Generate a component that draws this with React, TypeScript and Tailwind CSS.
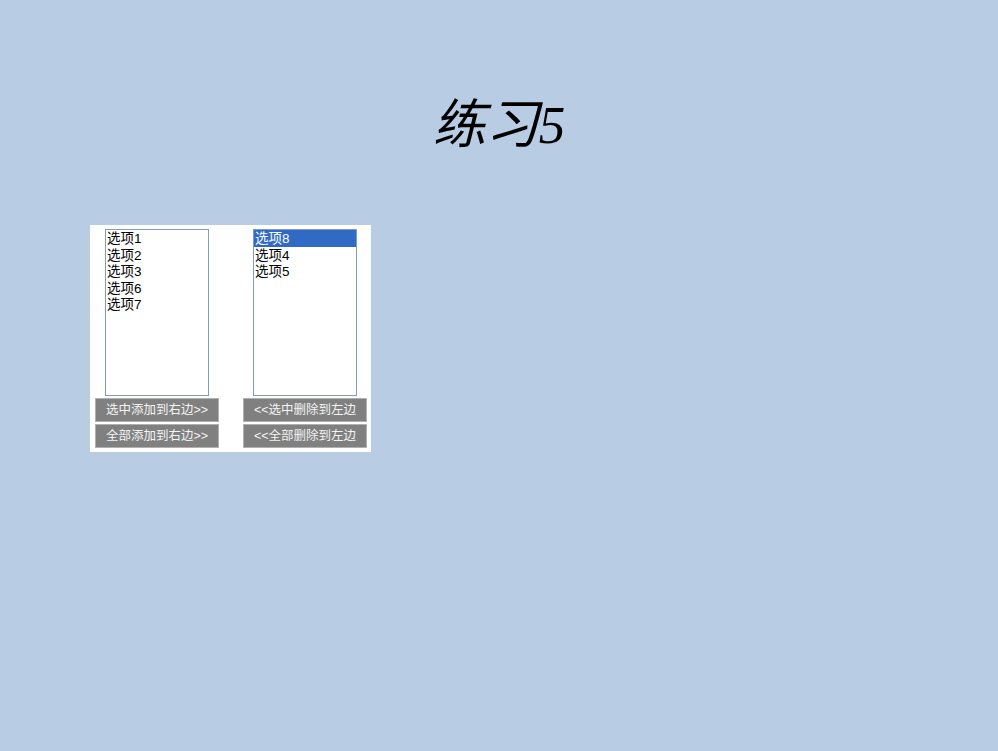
import React from "react";

const leftItems = ["选项1", "选项2", "选项3", "选项6", "选项7"];
const rightItems = ["选项8", "选项4", "选项5"];

function ListBox({ items, selected }: { items: string[]; selected?: number }) {
  return (
    <div className="w-[104px] h-[167px] border border-[#7f9db9] bg-white mx-auto">
      {items.map((t, i) => (
        <div
          key={t}
          className={
            i === selected
              ? "h-[16.6px] leading-[17px] pl-[1px] text-[13.5px] bg-[#316ac5] text-white"
              : "h-[16.6px] leading-[17px] pl-[1px] text-[13.5px] text-black"
          }
        >
          {t}
        </div>
      ))}
    </div>
  );
}

function Btn({ label }: { label: string }) {
  return (
    <div className="w-[124px] h-[24px] bg-[#808080] border border-[#b0b0b0] text-[#f4f4f4] text-[12.5px] leading-[22px] text-center whitespace-nowrap">
      {label}
    </div>
  );
}

export default function App() {
  return (
    <div
      className="w-[998px] h-[751px] bg-[#b8cce4] overflow-hidden"
      style={{ fontFamily: '"Liberation Sans", "Noto Sans CJK SC", sans-serif' }}
    >
      <h1
        className="mt-[92px] h-[66px] overflow-hidden text-center text-[53px] leading-[66px] italic text-black"
        style={{ fontFamily: '"Liberation Serif", "Noto Sans CJK SC", serif' }}
      >
        练习5
      </h1>
      <div className="ml-[90px] mt-[67px] w-[281px] h-[227px] bg-white pt-[4px] pl-[5px] flex gap-[24px]">
        <div className="flex flex-col gap-[2px] w-[124px]">
          <ListBox items={leftItems} />
          <Btn label="选中添加到右边>>" />
          <Btn label="全部添加到右边>>" />
        </div>
        <div className="flex flex-col gap-[2px] w-[124px]">
          <ListBox items={rightItems} selected={0} />
          <Btn label="<<选中删除到左边" />
          <Btn label="<<全部删除到左边" />
        </div>
      </div>
    </div>
  );
}
